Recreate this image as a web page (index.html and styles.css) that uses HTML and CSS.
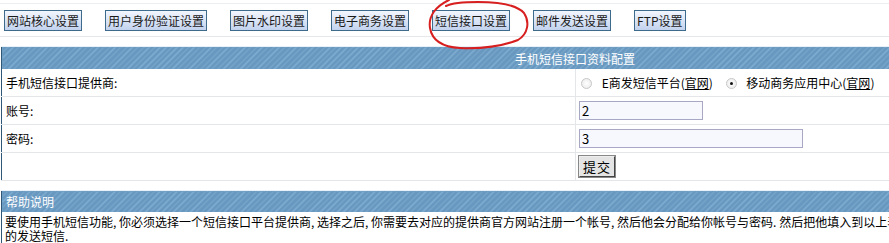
FILE: index.html
```html
<!DOCTYPE html>
<html>
<head>
    <link rel="stylesheet" href="styles.css">
</head>
<body>
    <div class="tabs">
        <button class="tab-btn">网站核心设置</button>
        <button class="tab-btn">用户身份验证设置</button>
        <button class="tab-btn">图片水印设置</button>
        <button class="tab-btn">电子商务设置</button>
        <button class="tab-btn">短信接口设置</button>
        <button class="tab-btn">邮件发送设置</button>
        <button class="tab-btn">FTP设置</button>
    </div>

    <table class="panel">
        <tr>
            <th colspan="2" class="panel-title center">手机短信接口资料配置</th>
        </tr>
        <tr>
            <td class="label">手机短信接口提供商:</td>
            <td class="field">
                <label class="radio-item"><input type="radio" name="sms"> E商发短信平台(<a href="#">官网</a>)</label>
                <label class="radio-item"><input type="radio" name="sms" checked> 移动商务应用中心(<a href="#">官网</a>)</label>
            </td>
        </tr>
        <tr>
            <td class="label">账号:</td>
            <td class="field"><input type="text" class="text-input short" value="2"></td>
        </tr>
        <tr>
            <td class="label">密码:</td>
            <td class="field"><input type="text" class="text-input long" value="3"></td>
        </tr>
        <tr>
            <td class="label"></td>
            <td class="field"><button class="submit-btn">提交</button></td>
        </tr>
    </table>

    <table class="panel help">
        <tr>
            <th class="panel-title">帮助说明</th>
        </tr>
        <tr>
            <td class="help-text">
                <p class="help-line">要使用手机短信功能, 你必须选择一个短信接口平台提供商, 选择之后, 你需要去对应的提供商官方网站注册一个帐号, 然后他会分配给你帐号与密码. 然后把他填入到以上表单中并提交, 系统就可以正常</p>
                <p class="help-line">的发送短信.</p>
            </td>
        </tr>
    </table>

    <!-- red marker drawn around the active tab -->
    <svg class="marker" width="889" height="60" viewBox="0 0 889 60">
        <path d="M449 0 C 436 6, 428 16, 430 28 C 432 40, 442 47, 460 48 C 485 49, 505 45, 518 40 C 528 34, 530 22, 524 13 C 516 4, 498 2, 478 2 C 462 2, 452 3, 446 6"
              fill="none" stroke="#d81f1f" stroke-width="2" stroke-linecap="round"/>
    </svg>
</body>
</html>
```

FILE: styles.css
```css
body {
    margin: 0;
    font-family: "Noto Sans CJK SC", "Liberation Sans", sans-serif;
    font-size: 12px;
    color: #000;
    background-color: #fff;
    position: relative;
    width: 1160px;
}
.tabs {
    margin-top: 3px;
    height: 32px;
    border-top: 1px solid #eceef0;
    border-bottom: 1px solid #e6e8ea;
    display: flex;
    align-items: center;
    padding-left: 4px;
    gap: 23px;
}
.tab-btn {
    height: 21px;
    padding: 0 2px;
    border: 1px solid #3e6a8c;
    background: linear-gradient(#f2f6fd, #c3d3ee);
    font-family: inherit;
    font-size: 12px;
    color: #1a1a1a;
    line-height: 19px;
    cursor: pointer;
}
.panel {
    width: 1148px;
    margin-left: 1px;
    border-collapse: collapse;
    border: 1px solid #2f5878;
    margin-top: 9px;
}
.panel-title {
    height: 22px;
    padding: 0 4px;
    color: #fff;
    font-weight: normal;
    text-align: left;
    background-color: #6898c0;
    background-image: repeating-linear-gradient(135deg, #6898c0 0, #6898c0 3px, #83afd2 3px, #83afd2 4px);
    border-top: 1px solid #e8f0f8;
}
.panel-title.center {
    text-align: center;
}
.panel td {
    height: 27px;
    border-bottom: 1px solid #e4e6e8;
    padding: 0 4px;
}
.label {
    width: 565px;
    border-right: 1px solid #e4e6e8;
}
.field {
    padding-left: 3px !important;
}
.radio-item {
    margin-left: 2px;
    margin-right: 8px;
}
.radio-item input {
    appearance: none;
    width: 11px;
    height: 11px;
    margin: 0 7px 0 0;
    border: 1px solid #c8c8c8;
    border-radius: 50%;
    background: radial-gradient(#ffffff, #e8e8e8);
    vertical-align: -1px;
    position: relative;
}
.radio-item input:checked::after {
    content: "";
    position: absolute;
    left: 3px;
    top: 3px;
    width: 3px;
    height: 3px;
    border-radius: 50%;
    background-color: #111;
}
.radio-item a {
    color: #000;
    text-decoration: underline;
}
.text-input {
    height: 19px;
    box-sizing: border-box;
    border: 1px solid #a8a8c4;
    background-color: #f7f8fe;
    padding: 0 2px;
    font-family: inherit;
    font-size: 13px;
    color: #000;
}
.text-input.short {
    width: 124px;
}
.text-input.long {
    width: 224px;
}
.submit-btn {
    width: 36px;
    height: 21px;
    padding: 0;
    border: 1px solid #555;
    border-color: #eee #444 #444 #eee;
    outline: 1px solid #888;
    background-color: #e4e4e4;
    font-family: inherit;
    font-size: 13px;
    letter-spacing: 1px;
    color: #000;
}
.help {
    margin-top: 9px;
}
.help .panel-title {
    height: 21px;
}
.help-text {
    padding: 3px 3px !important;
    border-bottom: none !important;
}
.help-line {
    margin: 0;
    height: 14px;
    line-height: 14px;
    white-space: nowrap;
}
.marker {
    position: absolute;
    left: 0;
    top: 0;
    pointer-events: none;
}
```
